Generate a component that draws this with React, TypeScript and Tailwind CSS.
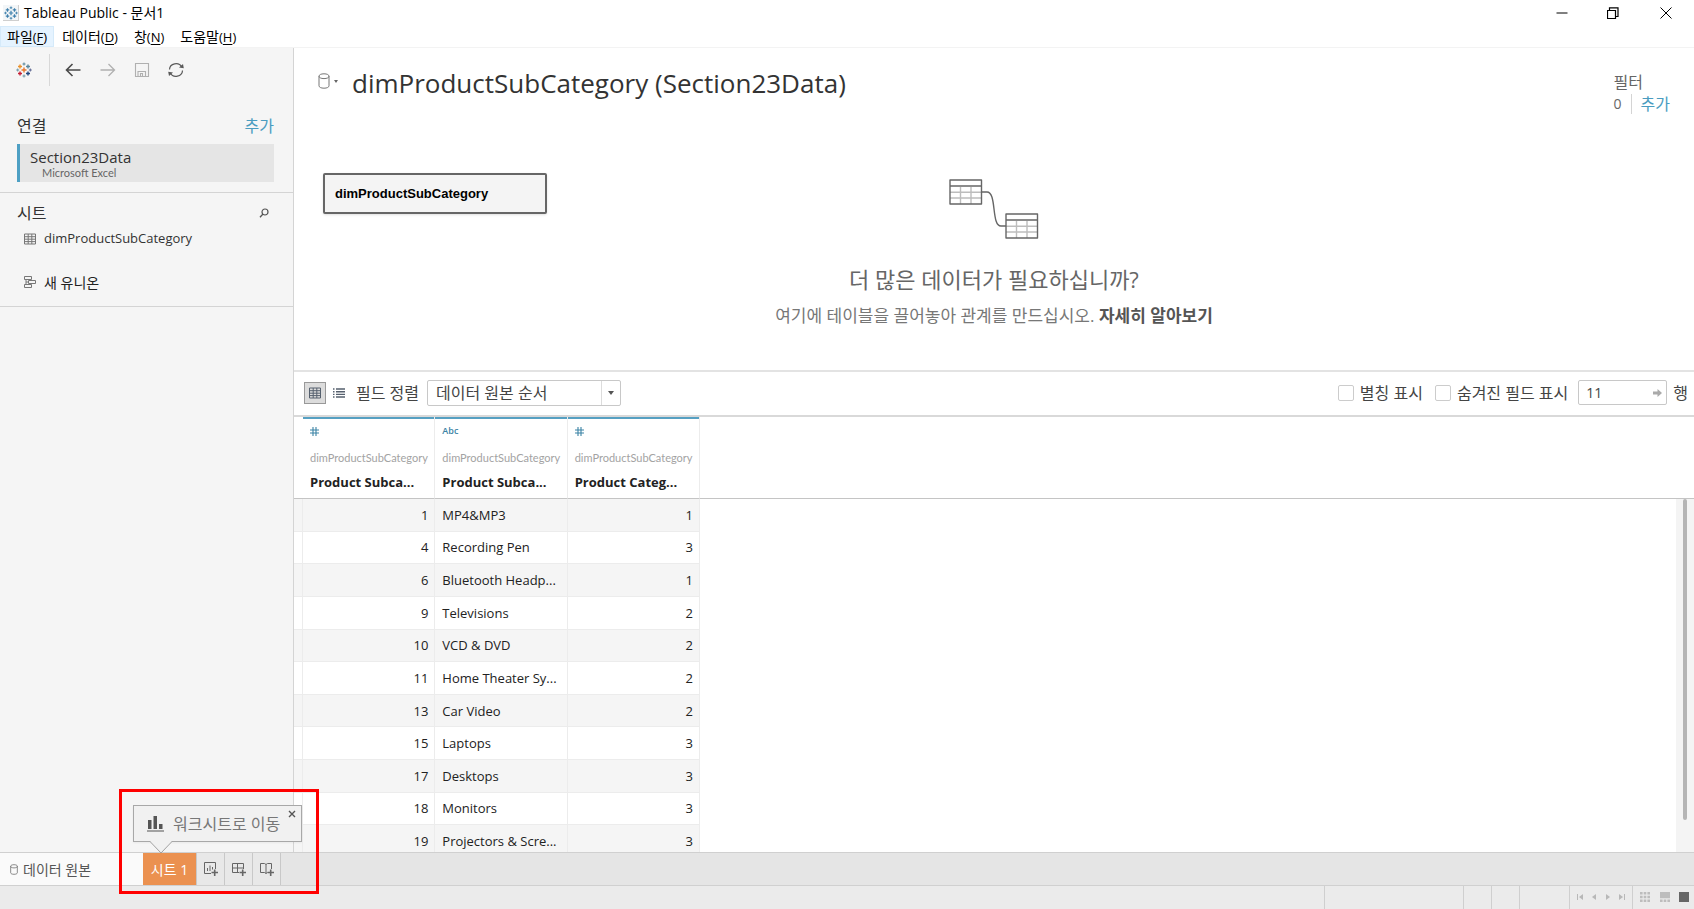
import React from "react";

const rows: [number, string, number][] = [
  [1, "MP4&MP3", 1],
  [4, "Recording Pen", 3],
  [6, "Bluetooth Headp...", 1],
  [9, "Televisions", 2],
  [10, "VCD & DVD", 2],
  [11, "Home Theater Sy...", 2],
  [13, "Car Video", 2],
  [15, "Laptops", 3],
  [17, "Desktops", 3],
  [18, "Monitors", 3],
  [19, "Projectors & Scre...", 3],
];

const columns = [
  { type: "number", name: "Product Subca..." },
  { type: "text", name: "Product Subca..." },
  { type: "number", name: "Product Categ..." },
];

const menus = [
  { label: "파일", hotkey: "F", active: true },
  { label: "데이터", hotkey: "D", active: false },
  { label: "창", hotkey: "N", active: false },
  { label: "도움말", hotkey: "H", active: false },
];

const marks: [number, number, number, string][] = [
  [8, 8, 2.5, "#e8762d"],
  [4, 4.5, 2, "#eb9129"],
  [12, 4.5, 2, "#5b879b"],
  [4, 11.5, 2, "#c72035"],
  [12, 11.5, 2, "#1f457e"],
  [8, 2, 1.5, "#59879b"],
  [8, 14, 1.5, "#7099a6"],
  [1.7, 8, 1.5, "#7099a6"],
  [14.3, 8, 1.5, "#5c6692"],
];

function Logo({ size, color }: { size: string; color?: string }) {
  return (
    <svg viewBox="0 0 16 16" className={size} aria-hidden="true">
      {marks.map(([x, y, r, c]) => (
        <path
          key={`${x}-${y}`}
          d={`M${x - r} ${y}H${x + r}M${x} ${y - r}V${y + r}`}
          stroke={color ?? c}
          strokeWidth={r > 1.6 ? 1.4 : 1}
          fill="none"
        />
      ))}
    </svg>
  );
}

function TableIcon() {
  return (
    <svg viewBox="0 0 12 12" className="size-3" fill="none" stroke="currentColor" aria-hidden="true">
      <path d="M.5 1H11.5V11H.5ZM.5 3.7H11.5M.5 6.2H11.5M.5 8.6H11.5M4.2 1V11M7.8 1V11" strokeWidth="1" />
    </svg>
  );
}

function Cylinder({ size }: { size: string }) {
  return (
    <svg viewBox="0 0 12 16" className={size} fill="none" stroke="currentColor" aria-hidden="true">
      <path d="M1 3.2V12.8C1 14.2 3 15.2 6 15.2S11 14.2 11 12.8V3.2M6 5.6C3 5.6 1 4.6 1 3.2S3 .8 6 .8 11 1.8 11 3.2 9 5.6 6 5.6Z" />
    </svg>
  );
}

function RelationIcon() {
  return (
    <svg viewBox="0 0 90 60" className="h-[60px] w-[90px]" fill="none" aria-hidden="true">
      {[
        [0, 0],
        [56, 34],
      ].map(([x, y]) => (
        <g key={x} transform={`translate(${x} ${y})`}>
          <path d="M1 13.2H32M1 19H32M11.5 8V25M22 8V25" stroke="#bdbdbd" strokeWidth="1.4" />
          <path d="M1 1H32.5V25H1ZM1 7H32.5" stroke="#666" strokeWidth="1.4" strokeLinejoin="round" />
        </g>
      ))}
      <path d="M32.5 13H38C48 13 42 47 52 47H57" stroke="#666" strokeWidth="1.4" />
    </svg>
  );
}

function TitleBar() {
  return (
    <header className="shrink-0 border-b border-[#f3f3f3] bg-white text-black">
      <div className="flex h-[26px] items-center">
        <span className="ml-[3px] flex size-4 items-center justify-center border-r border-b border-[#cfcfcf] bg-[#f3f6f8]">
          <Logo size="size-3.5" color="#3f80ac" />
        </span>
        <h1 className="ml-[5px] text-[14px] leading-4">Tableau Public - 문서1</h1>
        <div className="ml-auto flex items-center">
          <button aria-label="최소화" className="flex h-[25px] w-[51px] items-center justify-center">
            <svg viewBox="0 0 12 12" className="size-3" stroke="currentColor"><path d="M.5 6H11.5" /></svg>
          </button>
          <button aria-label="이전 크기로 복원" className="flex h-[25px] w-[51px] items-center justify-center">
            <svg viewBox="0 0 12 12" className="size-3" fill="none" stroke="currentColor"><path d="M.5 3.5H8.5V11.5H.5ZM2.5 3.5V.9H11V9.5H8.5" strokeWidth="1.2" /></svg>
          </button>
          <button aria-label="닫기" className="flex h-[25px] w-14 items-center justify-center">
            <svg viewBox="0 0 12 12" className="size-3" stroke="currentColor"><path d="M.5 .5L11.5 11.5M11.5 .5L.5 11.5" /></svg>
          </button>
        </div>
      </div>
      <nav className="flex h-[21px]">
        {menus.map((m) => (
          <button
            key={m.label}
            className={
              m.active
                ? "flex items-center border border-[#d5eafa] bg-[#e5f3ff] px-1.5 text-[14px] leading-4 whitespace-nowrap"
                : "flex items-center border border-transparent px-[7px] text-[14px] leading-4 whitespace-nowrap"
            }
          >
            {m.label}
            <span className="text-[13px]">
              (<u className="underline-offset-2">{m.hotkey}</u>)
            </span>
          </button>
        ))}
      </nav>
    </header>
  );
}

function Sidebar() {
  return (
    <aside className="flex w-[294px] shrink-0 flex-col border-r border-[#d4d4d4] bg-[#f5f5f5] text-[#333]">
      <div className="flex h-[43px] items-center pl-4">
        <button aria-label="시작 페이지"><Logo size="size-4" /></button>
        <span className="ml-[17px] h-8 w-px bg-[#d8d8d8]" />
        <button aria-label="뒤로" className="ml-[15px] text-[#4a4a4a]">
          <svg viewBox="0 0 16 16" className="size-4" fill="none" stroke="currentColor"><path d="M15.5 8H1.5M7.5 2L1.5 8L7.5 14" strokeWidth="1.6" /></svg>
        </button>
        <button aria-label="앞으로" className="ml-[19px] text-[#b0b0b0]">
          <svg viewBox="0 0 16 16" className="size-4" fill="none" stroke="currentColor"><path d="M.5 8H14M8.5 2L14.5 8L8.5 14" strokeWidth="1.3" /></svg>
        </button>
        <button aria-label="저장" className="ml-[18px] text-[#b0b0b0]">
          <svg viewBox="0 0 16 16" className="size-4" fill="none" stroke="currentColor"><path d="M1.500 1.500H14.500V14.500H1.500ZM4 14V9.500H11.500V14M6.500 14V11.500H8.500V14" strokeWidth="1.1" /></svg>
        </button>
        <button aria-label="새로 고침" className="ml-[18px] text-[#5a5a5a]">
          <svg viewBox="0 0 16 16" className="size-4" fill="none" stroke="currentColor"><path d="M1.5 7.5A6.5 6 0 0 1 13.8 5M14.5 8.5A6.5 6 0 0 1 2.2 11" strokeWidth="1.2" /><path d="M11 5.5L15.8 6.2L15 2ZM5 10.5L.2 9.8L1 14Z" fill="currentColor" stroke="none" /></svg>
        </button>
      </div>
      <section className="flex flex-col border-b border-[#d4d4d4] px-[17px] pt-[26px] pb-2.5">
        <div className="flex h-[18px] items-center justify-between pr-0.5 text-[16px] leading-4">
          <h2>연결</h2>
          <button className="text-[#4a9cc0]">추가</button>
        </div>
        <button className="mt-[9px] mr-0.5 flex h-[38px] flex-col border-l-[3px] border-[#4ea0c4] bg-[#e5e5e5] pt-[5px] pl-2.5 text-left">
          <span className="text-[15px] leading-[17px]">Section23Data</span>
          <span className="ml-3 font-['Lato',sans-serif] text-[11px] leading-[13px] text-[#666]">Microsoft Excel</span>
        </button>
      </section>
      <section className="flex flex-col border-b border-[#d4d4d4] pt-[11px] pb-[13px] pl-[17px]">
        <div className="flex h-[18px] items-center justify-between pr-6">
          <h2 className="text-[16px] leading-4">시트</h2>
          <button aria-label="시트 검색" className="text-[#555]">
            <svg viewBox="0 0 10 10" className="size-2.5" fill="none" stroke="currentColor"><circle cx="6" cy="4" r="3" strokeWidth="1.2" /><path d="M4 6L1 9.2" strokeWidth="1.3" /></svg>
          </button>
        </div>
        <button className="mt-1.5 flex h-[22px] items-center gap-2 pl-[7px] text-[13px]">
          <span className="text-[#777]"><TableIcon /></span>
          dimProductSubCategory
        </button>
        <button className="mt-[21px] flex h-[22px] items-center gap-2 pl-[7px] text-[14px] text-[#222]">
          <svg viewBox="0 0 12 12" className="size-3 text-[#777]" fill="none" stroke="currentColor"><path d="M.5 .5H7.5V3.5H.5ZM4.5 4.5H11.5V7.5H4.5ZM.5 8.5H7.5V11.5H.5ZM2 3.5V8.5M2 6H4.5" /></svg>
          새 유니온
        </button>
      </section>
    </aside>
  );
}

function Canvas() {
  return (
    <section className="relative flex h-[324px] shrink-0 flex-col border-b-2 border-[#e3e3e3]">
      <div className="flex items-start pt-[15px] pr-6 pl-6">
        <button aria-label="데이터 원본 메뉴" className="mt-2.5 flex items-center gap-1 text-[#777]">
          <Cylinder size="h-4 w-3" />
          <span className="border-x-2 border-t-[3px] border-x-transparent border-t-[#666]" />
        </button>
        <h2 className="ml-3.5 text-[26px] leading-10 text-[#333]">dimProductSubCategory (Section23Data)</h2>
        <div className="ml-auto pt-2 text-[16px] leading-[22px] text-[#666]">
          <div>필터</div>
          <div className="flex items-center gap-[9px]">
            <span className="text-[14px]">0</span>
            <span className="h-5 w-px bg-[#d4d4d4]" />
            <button className="text-[#4a9cc0]">추가</button>
          </div>
        </div>
      </div>
      <button className="absolute top-[125px] left-[29px] flex h-[41px] w-[224px] items-center rounded-xs border-2 border-[#666] bg-[#f4f4f4] px-2.5 font-['Liberation_Sans',sans-serif] text-[13px] font-bold text-black shadow-sm">
        dimProductSubCategory
      </button>
      <div className="mt-auto flex flex-col items-center pb-[43px] text-[#666]">
        <RelationIcon />
        <p className="mt-[26px] text-[22px] leading-7">더 많은 데이터가 필요하십니까?</p>
        <p className="mt-3 text-[17px] leading-[22px] text-[#777]">
          여기에 테이블을 끌어놓아 관계를 만드십시오.{" "}
          <a href="#learn" className="font-bold text-[#555]">자세히 알아보기</a>
        </p>
      </div>
    </section>
  );
}

function GridToolbar() {
  return (
    <div className="flex h-[45px] shrink-0 items-center border-b-2 border-[#d9d9d9] pr-1.5 pb-0.5 pl-2.5 text-[16px] text-[#444]">
      <button aria-label="데이터 그리드" className="flex size-[22px] items-center justify-center border border-[#999] bg-[#dcdcdc] text-[#56606e]">
        <TableIcon />
      </button>
      <button aria-label="메타데이터 목록" className="ml-[7px] text-[#56606e]">
        <svg viewBox="0 0 12 10" className="h-2.5 w-3" fill="none" stroke="currentColor"><path d="M0 1H1.5M3 1H12M0 3.700H1.500M3 3.700H12M0 6.400H1.500M3 6.400H12M0 9H1.500M3 9H12" strokeWidth="1.4" /></svg>
      </button>
      <label htmlFor="sort" className="ml-[11px] whitespace-nowrap">필드 정렬</label>
      <div className="ml-2 grid h-[26px] w-[194px] rounded-xs border border-[#c8c8c8]">
        <select id="sort" className="col-start-1 row-start-1 w-full appearance-none bg-transparent pl-2 text-[16px] leading-5">
          <option>데이터 원본 순서</option>
        </select>
        <span className="pointer-events-none col-start-1 row-start-1 flex w-[19px] items-center justify-center justify-self-end border-l border-[#dcdcdc]">
          <span className="border-x-[3px] border-t-4 border-x-transparent border-t-[#555]" />
        </span>
      </div>
      <div className="ml-auto flex items-center whitespace-nowrap">
        <input id="alias" type="checkbox" className="size-4 appearance-none rounded-xs border border-[#ccc] bg-white" />
        <label htmlFor="alias" className="ml-1.5">별칭 표시</label>
        <input id="hidden-fields" type="checkbox" className="ml-3 size-4 appearance-none rounded-xs border border-[#ccc] bg-white" />
        <label htmlFor="hidden-fields" className="ml-1.5">숨겨진 필드 표시</label>
        <div className="ml-2.5 flex h-[25px] w-[89px] items-center rounded-xs border border-[#c8c8c8] pr-1">
          <input id="row-count" defaultValue="11" className="min-w-0 flex-1 bg-transparent pl-[7px] text-[14px] leading-5 outline-none" />
          <svg viewBox="0 0 9 8" className="h-2 w-[9px]" fill="#aaa" aria-hidden="true"><path d="M0 2.5H4.5V0L9 4L4.5 8V5.5H0Z" /></svg>
        </div>
        <label htmlFor="row-count" className="ml-1.5">행</label>
      </div>
    </div>
  );
}

function DataGrid() {
  return (
    <div className="flex min-h-0 flex-1 overflow-hidden bg-[linear-gradient(#c4c4c4,#c4c4c4)] bg-[length:100%_1px] bg-[position:0_81px] bg-no-repeat">
      <table className="h-[441px] w-[406px] shrink-0 table-fixed border-separate border-spacing-0 text-[13px] text-[#222]">
        <colgroup>
          <col className="w-[9px]" />
          <col /><col /><col />
        </colgroup>
        <thead>
          <tr className="h-[82px]">
            <td className="border-b border-[#c4c4c4]" />
            {columns.map((c, i) => (
              <th key={i} scope="col" className="border-r border-b border-r-[#ececec] border-b-[#c4c4c4] p-0 text-left align-top font-normal">
                <div className="flex h-[81px] flex-col border-t-2 border-[#56a0c2] pt-[5px] pl-[7px]">
                  <span className="flex h-[14px] items-center text-[9px] leading-3 font-semibold text-[#3b83a5]">
                    {c.type === "number" ? (
                      <svg viewBox="0 0 9 9" className="size-[9px]" fill="none" stroke="currentColor" aria-label="숫자"><path d="M3 0V9M6 0V9M0 3H9M0 6H9" strokeWidth="1.1" /></svg>
                    ) : (
                      "Abc"
                    )}
                  </span>
                  <span className="mt-3 font-['Lato',sans-serif] text-[11px] leading-4 text-[#a3a3a3]">dimProductSubCategory</span>
                  <span className="mt-2 text-[13px] leading-4 font-bold whitespace-nowrap text-[#222]">{c.name}</span>
                </div>
              </th>
            ))}
          </tr>
        </thead>
        <tbody>
          {rows.map(([id, name, cat]) => (
            <tr key={id} className="odd:bg-[#f5f5f5] even:bg-white">
              <td className="border-r border-b border-[#ececec] p-0" />
              <td className="border-r border-b border-[#ececec] py-0 pr-1.5 pl-0 text-right leading-5">{id}</td>
              <td className="border-r border-b border-[#ececec] py-0 pr-0 pl-[7px] leading-5 whitespace-nowrap">{name}</td>
              <td className="border-r border-b border-[#ececec] py-0 pr-1.5 pl-0 text-right leading-5">{cat}</td>
            </tr>
          ))}
        </tbody>
      </table>
      <div className="mt-[82px] ml-auto flex w-[18px] justify-center bg-[#f4f4f4]">
        <span className="h-[91%] w-1 rounded-full bg-[#b5b5b5]" />
      </div>
    </div>
  );
}

function TabBar() {
  const add = "flex w-7 items-center justify-center border-r border-[#c8c8c8] bg-[#e8e8e8] text-[#666]";
  return (
    <div className="flex h-[34px] shrink-0 border-y border-[#d0d0d0] bg-[#e5e5e5] text-[14px] text-[#555]">
      <button className="flex w-[143px] items-center gap-[5px] bg-[#fafafa] pl-2.5">
        <Cylinder size="h-[11px] w-2" />
        데이터 원본
      </button>
      <div className="relative flex border-r border-[#c8c8c8]">
        <button className="flex w-[53px] items-center justify-center bg-[#eb9150] text-white">시트 1</button>
        <div className="absolute bottom-[-9px] left-[-24px] z-10 h-[105px] w-[200px] border-[3px] border-[#f00]">
          <div className="mt-[13px] ml-[11px] flex h-[37px] w-[169px] items-center border border-[#a8a8a8] bg-[#f1f1f1] pl-[13px] text-[#777] shadow-xs">
            <svg viewBox="0 0 17 17" className="size-[17px]" fill="#555" aria-hidden="true"><path d="M1 5H4.5V14H1ZM6.500 1H10V14H6.500ZM12 9H15.500V14H12ZM0 15.500H17V16.500H0Z" /></svg>
            <button className="ml-[9px] text-[16px] whitespace-nowrap">워크시트로 이동</button>
            <button aria-label="닫기" className="mr-[5px] mb-5 ml-auto">
              <svg viewBox="0 0 8 8" className="size-2" stroke="#555" strokeWidth="1.4"><path d="M1 1L7 7M7 1L1 7" /></svg>
            </button>
          </div>
          <svg viewBox="0 0 24 13" className="absolute top-[49px] left-[27px] h-[13px] w-6" aria-hidden="true"><path d="M1 0L12 12L23 0Z" fill="#f1f1f1" /><path d="M1 .5L12 12L23 .5" fill="none" stroke="#a0a0a0" /></svg>
        </div>
      </div>
      <button aria-label="새 워크시트" className={add}>
        <svg viewBox="0 0 14 14" className="size-3.5" fill="none" stroke="currentColor"><path d="M7 11.500H.5V.5H11.500V7M3.500 9V6M6 9V3.500M8.500 7.500V5" /><path d="M7.500 10.500H14M10.700 7.500V14" strokeWidth="1.6" /></svg>
      </button>
      <button aria-label="새 대시보드" className={add}>
        <svg viewBox="0 0 14 14" className="size-3.5" fill="none" stroke="currentColor"><path d="M7 10.500H.5V1.500H11.500V7M.5 6H11.500M5.500 1.500V10.500" /><path d="M7.500 10.500H14M10.700 7.500V14" strokeWidth="1.6" /></svg>
      </button>
      <button aria-label="새 스토리" className={add}>
        <svg viewBox="0 0 14 14" className="size-3.5" fill="none" stroke="currentColor"><path d="M6 2.500L4.500 1.500H.5V10.500H4.500L6 11.500L7.500 10.500M6 2.500L7.500 1.500H11.500V7M6 2.500V11.500" /><path d="M7.500 10.500H14M10.700 7.500V14" strokeWidth="1.6" /></svg>
      </button>
    </div>
  );
}

function StatusBar() {
  return (
    <footer className="flex h-[23px] shrink-0 items-stretch justify-end bg-[#ebebeb]">
      <span className="w-[139px] border-l border-[#cfcfcf]" />
      <span className="w-7 border-l border-[#cfcfcf]" />
      <span className="w-7 border-l border-[#cfcfcf]" />
      <span className="w-[50px] border-l border-[#cfcfcf]" />
      <div className="flex w-[63px] items-center justify-between border-l border-[#cfcfcf] px-[7px] pb-0.5 text-[#b8b8b8]">
        <button aria-label="처음"><svg viewBox="0 0 6 6" className="size-1.5" fill="currentColor"><path d="M0 0H1V6H0ZM6 0V6L2 3Z" /></svg></button>
        <button aria-label="이전"><svg viewBox="0 0 4 6" className="h-1.5 w-1" fill="currentColor"><path d="M4 0V6L0 3Z" /></svg></button>
        <button aria-label="다음"><svg viewBox="0 0 4 6" className="h-1.5 w-1" fill="currentColor"><path d="M0 0V6L4 3Z" /></svg></button>
        <button aria-label="마지막"><svg viewBox="0 0 6 6" className="size-1.5" fill="currentColor"><path d="M5 0H6V6H5ZM0 0V6L4 3Z" /></svg></button>
      </div>
      <div className="flex w-[62px] items-center justify-between border-l border-[#cfcfcf] pr-[5px] pb-0.5 pl-[7px] text-[#bdbdbd]">
        <button aria-label="시트 정렬기"><svg viewBox="0 0 10 10" className="size-2.5" fill="currentColor"><path d="M0 0H2.600V2.600H0ZM3.700 0H6.300V2.600H3.700ZM7.400 0H10V2.600H7.400ZM0 3.700H2.600V6.300H0ZM3.700 3.700H6.300V6.300H3.700ZM7.400 3.700H10V6.300H7.400ZM0 7.400H2.600V10H0ZM3.700 7.400H6.300V10H3.700ZM7.400 7.400H10V10H7.400Z" /></svg></button>
        <button aria-label="필름 스트립"><svg viewBox="0 0 10 10" className="size-2.5" fill="currentColor"><path d="M0 0H10V6.300H0ZM0 7.400H2.600V10H0ZM3.700 7.400H6.300V10H3.700ZM7.400 7.400H10V10H7.400Z" /></svg></button>
        <button aria-label="탭" className="size-2.5 bg-[#666]" />
      </div>
    </footer>
  );
}

export default function App() {
  return (
    <div className="flex h-screen flex-col overflow-hidden bg-white font-['Open_Sans','Noto_Sans_CJK_KR',sans-serif]">
      <TitleBar />
      <div className="flex min-h-0 flex-1">
        <Sidebar />
        <main className="flex min-w-0 flex-1 flex-col">
          <Canvas />
          <GridToolbar />
          <DataGrid />
        </main>
      </div>
      <TabBar />
      <StatusBar />
    </div>
  );
}
